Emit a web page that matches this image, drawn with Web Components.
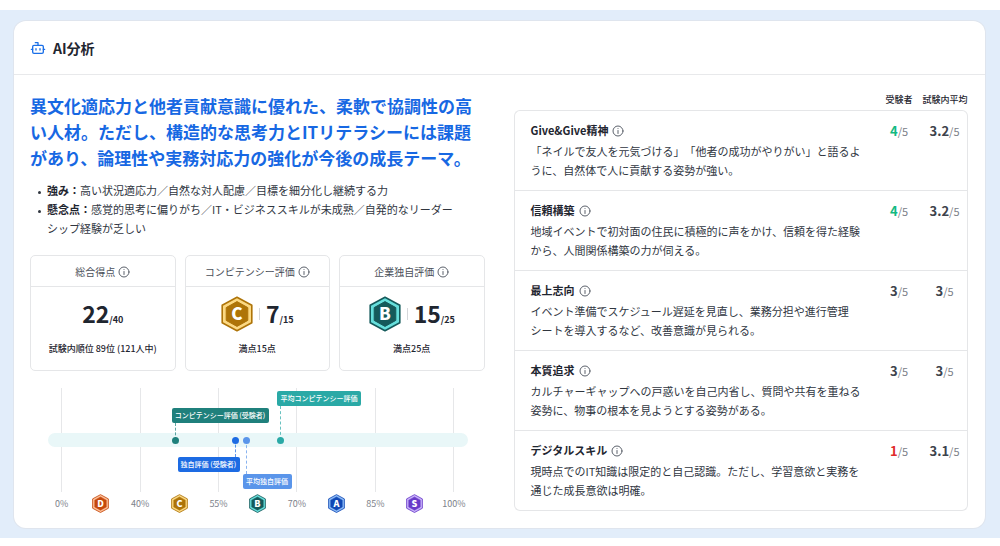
<!DOCTYPE html>
<html lang="ja">
<head>
<meta charset="utf-8">
<meta name="viewport" content="width=device-width, initial-scale=1">
<title>AI分析</title>
<style>
  body {
    margin: 10px 0 8px;
    background: #fff;
    color: #1f2630;
    font-family: "Noto Sans CJK JP", "Noto Sans", sans-serif;
    font-size: 11px;
    line-height: 19px;
    line-break: strict;
    text-spacing-trim: space-all;
  }
</style>
</head>
<body>
<analysis-page></analysis-page>

<script>
class BaseElement extends HTMLElement {
  connectedCallback() {
    if (this.shadowRoot) return;
    this.attachShadow({ mode: "open" }).innerHTML = this.render();
  }
}

/* Round "i" button beside a label */
customElements.define("info-button", class extends BaseElement {
  render() {
    return `
      <style>
        :host { display: inline-flex; vertical-align: middle; }
        button { display: flex; margin: 0; padding: 0; border: 0; background: none; color: #5b616b; }
        svg { width: 12px; height: 12px; }
      </style>
      <button type="button" aria-label="説明">
        <svg viewBox="0 0 24 24" fill="none" stroke="currentColor" stroke-width="2" stroke-linecap="round">
          <circle cx="12" cy="12" r="10"/><path d="M12 11v6M12 7.2v.1"/>
        </svg>
      </button>`;
  }
});

/* Hexagonal rank badge */
const RANKS = {
  D: ["#c5480b", "#fdc09a"],
  C: ["#ae7408", "#fcd983"],
  B: ["#155a5b", "#66dfdc"],
  A: ["#1148b5", "#8dbcf7"],
  S: ["#693bc9", "#c9b3fb"]
};
customElements.define("rank-badge", class extends BaseElement {
  render() {
    const rank = this.getAttribute("rank");
    const [dark, light] = RANKS[rank];
    return `
      <style>
        :host { display: block; width: 32px; flex: none; }
        svg { display: block; width: 100%; }
        text { font-weight: 900; font-size: 17px; fill: #fff; text-anchor: middle; }
      </style>
      <svg viewBox="0 0 32 36">
        <path d="M16 1.2 L30.8 9.2 V26.8 L16 34.8 L1.2 26.8 V9.2 Z" fill="${light}" stroke="${dark}" stroke-width="1.6" stroke-linejoin="round"/>
        <path d="M16 5.6 L26.8 11.6 V24.4 L16 30.4 L5.2 24.4 V11.6 Z" fill="${dark}" stroke="${dark}" stroke-linejoin="round"/>
        <text x="16" y="24">${rank}</text>
      </svg>`;
  }
});

/* Bordered card with a heading strip, a score and a caption */
customElements.define("score-card", class extends BaseElement {
  render() {
    return `
      <style>
        :host { display: block; border: 1px solid #e5e6e8; border-radius: 5px; text-align: center; }
        h3 {
          display: flex; justify-content: center; align-items: center; gap: 3px;
          margin: 0; padding: 6px 0 5px; border-bottom: 1px solid #e5e6e8;
          font-size: 10px; font-weight: 400; color: #4b5059;
        }
        .score { display: flex; justify-content: center; align-items: center; gap: 6px; height: 36px; margin-top: 9px; }
        .rule { width: 1px; height: 12px; background: #d5d7da; }
        .value { padding-top: 4px; font-size: 23px; font-weight: 700; line-height: 32px; }
        small { font-size: 9px; }
        p { margin: 7px 0 12px; font-size: 9px; font-weight: 500; }
      </style>
      <h3>${this.getAttribute("label")}<info-button></info-button></h3>
      <div class="score">
        ${this.hasAttribute("rank") ? `<rank-badge rank="${this.getAttribute("rank")}"></rank-badge><span class="rule"></span>` : ""}
        <span class="value">${this.getAttribute("value")}<small>/${this.getAttribute("max")}</small></span>
      </div>
      <p><slot></slot></p>`;
  }
});

/* One dot on the scale, with its flag above or below */
customElements.define("scale-marker", class extends BaseElement {
  render() {
    return `
      <style>
        :host {
          position: absolute; left: var(--at); top: 50%; width: 0; height: 0;
          color: var(--tone);
        }
        .dot { position: absolute; left: -4px; top: -3px; width: 7px; height: 7px; border-radius: 50%; background: currentColor; }
        .stem { position: absolute; left: -1px; height: var(--reach); border-left: 1px dashed currentColor; opacity: .7; }
        .flag {
          position: absolute; left: -4px; padding: 0 4px 0 3px; border-radius: 2px; white-space: nowrap;
          background: currentColor; font-size: 7px; font-weight: 500; line-height: 15px;
        }
        .flag span { color: #fff; }
        :host([side="up"]) .stem, :host([side="up"]) .flag { bottom: 0; }
        :host([side="down"]) .stem, :host([side="down"]) .flag { top: 0; }
        :host([side="up"]) .flag { margin-bottom: var(--reach); }
        :host([side="down"]) .flag { margin-top: var(--reach); }
        :host([align="end"]) .flag { left: auto; right: -4px; }
      </style>
      <span class="stem"></span><span class="dot"></span>
      <span class="flag"><span><slot></slot></span></span>`;
  }
});

/* Percent scale with rank badges between the ticks */
customElements.define("score-scale", class extends BaseElement {
  render() {
    const axis = ["0%", "D", "40%", "C", "55%", "B", "70%", "A", "85%", "S", "100%"];
    return `
      <style>
        :host { display: block; padding: 0 11px 0 12px; }
        .plot { position: relative; display: grid; height: 104px; }
        .lines, .axis { display: grid; grid-template-columns: repeat(11, 1fr); justify-items: center; }
        .lines, .bar { grid-area: 1 / 1; }
        .lines i:nth-child(odd) { width: 1px; background: #e6e7e9; }
        .bar { align-self: center; height: 14px; margin: 0 6px; border-radius: 7px; background: #e9f7f8; }
        .axis { align-items: center; margin-top: 2px; height: 19px; font-size: 9px; color: #7d828a; }
        .axis rank-badge { width: 17px; }
      </style>
      <div class="plot">
        <div class="lines">${axis.map(() => "<i></i>").join("")}</div>
        <div class="bar"></div>
        <slot></slot>
      </div>
      <div class="axis">${axis.map(a => RANKS[a] ? `<rank-badge rank="${a}"></rank-badge>` : `<span>${a}</span>`).join("")}</div>`;
  }
});

/* Competency table: examinee score against the average */
const ROWS = [
  ["Give&amp;Give精神", "「ネイルで友人を元気づける」「他者の成功がやりがい」と語るように、自然体で人に貢献する姿勢が強い。", "4", "3.2", "good"],
  ["信頼構築", "地域イベントで初対面の住民に積極的に声をかけ、信頼を得た経験から、人間関係構築の力が伺える。", "4", "3.2", "good"],
  ["最上志向", "イベント準備でスケジュール遅延を見直し、業務分担や進行管理シートを導入するなど、改善意識が見られる。", "3", "3", ""],
  ["本質追求", "カルチャーギャップへの戸惑いを自己内省し、質問や共有を重ねる姿勢に、物事の根本を見ようとする姿勢がある。", "3", "3", ""],
  ["デジタルスキル", "現時点でのIT知識は限定的と自己認識。ただし、学習意欲と実務を通じた成長意欲は明確。", "1", "3.1", "bad"]
];
customElements.define("competency-table", class extends BaseElement {
  render() {
    const line = "1px solid #e5e6e8";
    return `
      <style>
        :host { display: block; }
        table { width: 100%; border-collapse: separate; border-spacing: 0; table-layout: fixed; }
        .num { width: 46px; }
        thead td, thead th { padding: 0 0 4px; font-size: 9px; font-weight: 500; line-height: 13px; white-space: nowrap; }
        tbody th, tbody td { padding: 10px 0; border-bottom: ${line}; vertical-align: top; }
        tbody th { padding-left: 16px; border-left: ${line}; text-align: left; font-weight: 400; color: #30363f; }
        tbody td { text-align: center; color: #7b8088; font-size: 11px; }
        tbody td:last-child { border-right: ${line}; }
        tbody tr:first-child > * { border-top: ${line}; }
        tbody tr:first-child th { border-top-left-radius: 6px; }
        tbody tr:first-child td:last-child { border-top-right-radius: 6px; }
        tbody tr:last-child th { border-bottom-left-radius: 6px; }
        tbody tr:last-child td:last-child { border-bottom-right-radius: 6px; }
        h3 { display: flex; align-items: center; gap: 4px; margin: 0 0 2px; font-size: 11px; font-weight: 700; color: #1f2630; }
        p { margin: 0; max-width: 334px; }
        b { font-size: 13px; color: #3d434c; }
        .good b { color: #12b981; }
        .bad b { color: #e02b2b; }
      </style>
      <table>
        <colgroup><col><col class="num"><col class="num"></colgroup>
        <thead><tr><td></td><th scope="col">受験者</th><th scope="col">試験内平均</th></tr></thead>
        <tbody>${ROWS.map(([name, text, own, avg, tone]) => `
          <tr>
            <th scope="row"><h3>${name}<info-button></info-button></h3><p>${text}</p></th>
            <td class="${tone}"><b>${own}</b>/5</td>
            <td><b>${avg}</b>/5</td>
          </tr>`).join("")}
        </tbody>
      </table>`;
  }
});

/* White panel with an icon heading */
customElements.define("panel-card", class extends BaseElement {
  render() {
    return `
      <style>
        :host { display: block; border-radius: 12px; background: #fff; box-shadow: 0 0 0 1px #dfe5ee; }
        header { display: flex; align-items: center; gap: 7px; padding: 17px 16px 16px; border-bottom: 1px solid #e8e9eb; }
        svg { width: 16px; height: 16px; color: #1a6fe8; }
        h2 { margin: 0; font-size: 14px; line-height: 20px; font-weight: 700; }
      </style>
      <header>
        <svg viewBox="0 0 24 24" fill="none" stroke="currentColor" stroke-width="2" stroke-linecap="round" stroke-linejoin="round">
          <path d="M12 8V4H8"/><rect x="4" y="8" width="16" height="12" rx="2"/><path d="M2 14h2M20 14h2M15 13v2M9 13v2"/>
        </svg>
        <h2>${this.getAttribute("heading")}</h2>
      </header>
      <slot></slot>`;
  }
});

customElements.define("analysis-page", class extends BaseElement {
  render() {
    return `
      <style>
        :host { display: block; padding: 11px 15px 10px 14px; background: #e2edfa; }
        .columns { display: grid; grid-template-columns: 1fr 1fr; gap: 29px; padding: 18px 17px 15px 16px; }
        .lead { margin: 0; font-size: 17px; line-height: 26px; font-weight: 700; color: #1768e3; }
        ul { margin: 10px 0 17px; padding: 0 28px 0 17px; color: #30363f; list-style: none; }
        li::before {
          content: ""; display: inline-block; width: 3px; height: 3px; margin: 0 6px 0 -9px;
          border-radius: 50%; background: currentColor; vertical-align: middle;
        }
        li b { color: #1f2630; }
        .cards { display: grid; grid-template-columns: repeat(3, 1fr); gap: 9px; margin-bottom: 17px; }
      </style>
      <panel-card heading="AI分析">
        <div class="columns">
          <section>
            <p class="lead">異文化適応力と他者貢献意識に優れた、柔軟で協調性の高い人材。ただし、構造的な思考力とITリテラシーには課題があり、論理性や実務対応力の強化が今後の成長テーマ。</p>
            <ul>
              <li><b>強み：</b>高い状況適応力／自然な対人配慮／目標を細分化し継続する力</li>
              <li><b>懸念点：</b>感覚的思考に偏りがち／IT・ビジネススキルが未成熟／自発的なリーダーシップ経験が乏しい</li>
            </ul>
            <div class="cards">
              <score-card label="総合得点" value="22" max="40">試験内順位 89位 (121人中)</score-card>
              <score-card label="コンピテンシー評価" rank="C" value="7" max="15">満点15点</score-card>
              <score-card label="企業独自評価" rank="B" value="15" max="25">満点25点</score-card>
            </div>
            <score-scale>
              <scale-marker side="up" style="--at:31%;--reach:17px;--tone:#1f807c">コンピテンシー評価 (受験者)</scale-marker>
              <scale-marker side="down" align="end" style="--at:45%;--reach:17px;--tone:#1d6be3">独自評価 (受験者)</scale-marker>
              <scale-marker side="down" style="--at:47.5%;--reach:34px;--tone:#5a95ea">平均独自評価</scale-marker>
              <scale-marker side="up" style="--at:55.5%;--reach:34px;--tone:#2aa9a6">平均コンピテンシー評価</scale-marker>
            </score-scale>
          </section>
          <competency-table></competency-table>
        </div>
      </panel-card>`;
  }
});
</script>
</body>
</html>
